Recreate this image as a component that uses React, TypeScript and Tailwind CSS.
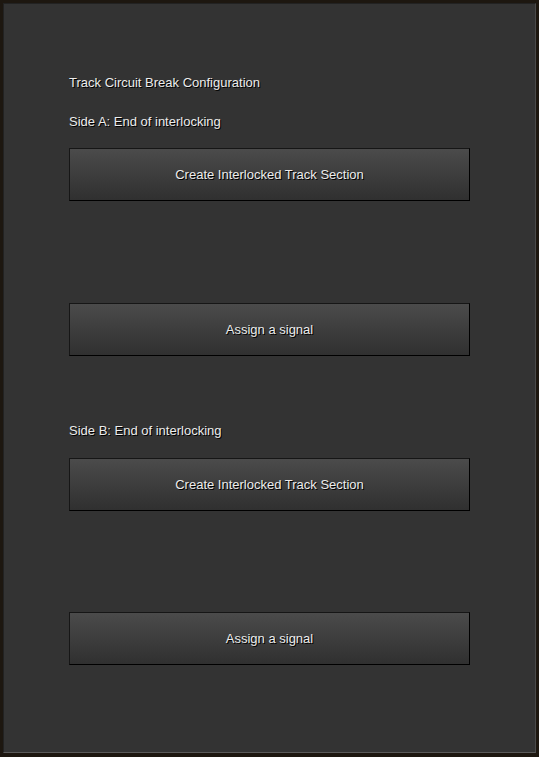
import React from 'react';

// Panel button with the vertical grey gradient
const PanelButton = ({ label }: { label: string }) => (
    <button
        type="button"
        className="flex h-[53px] w-[401px] items-center justify-center border border-[#161616] border-b-black border-r-black bg-gradient-to-b from-[#4b4b4b] to-[#303030] text-[13px] text-[#ececec] [text-shadow:1px_1px_0_#000]"
    >
        {label}
    </button>
);

const Label = ({ text, className = '' }: { text: string; className?: string }) => (
    <p className={`h-4 text-[13px] leading-4 text-[#ececec] [text-shadow:1px_1px_0_#000] ${className}`}>{text}</p>
);

export default function App() {
    const sides = [
        { text: 'Side A: End of interlocking', top: 'mt-[23px]', first: 'mt-[18px]', second: 'mt-[102px]' },
        { text: 'Side B: End of interlocking', top: 'mt-[67px]', first: 'mt-[19px]', second: 'mt-[101px]' },
    ];

    return (
        <div className="h-[757px] w-[539px] overflow-hidden bg-[#1d1710] pl-[3px] pt-[3px] font-['Liberation_Sans',Arial,sans-serif]">
            <div className="h-[750px] w-[533px] border border-[#222] border-b-[#5a5a5a] border-r-[#4a4a4a] bg-[#333333] pl-[65px] pt-[71px]">
                <Label text="Track Circuit Break Configuration" />

                {sides.map(side => (
                    <div key={side.text} className={side.top}>
                        <Label text={side.text} />
                        <div className={side.first}>
                            <PanelButton label="Create Interlocked Track Section" />
                        </div>
                        <div className={side.second}>
                            <PanelButton label="Assign a signal" />
                        </div>
                    </div>
                ))}
            </div>
        </div>
    );
}
